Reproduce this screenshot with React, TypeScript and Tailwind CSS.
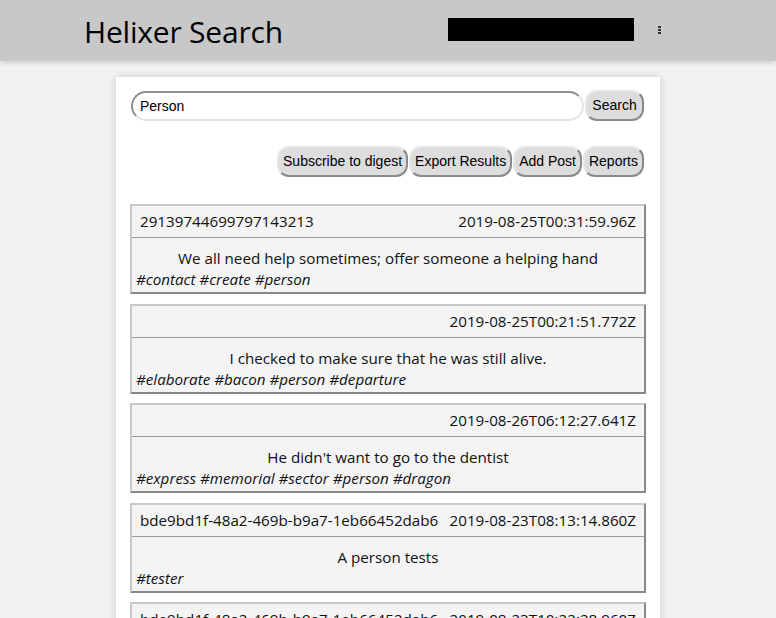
const posts = [
  {
    id: '29139744699797143213',
    date: '2019-08-25T00:31:59.96Z',
    text: 'We all need help sometimes; offer someone a helping hand',
    tags: ['contact', 'create', 'person'],
  },
  {
    id: '',
    date: '2019-08-25T00:21:51.772Z',
    text: 'I checked to make sure that he was still alive.',
    tags: ['elaborate', 'bacon', 'person', 'departure'],
  },
  {
    id: '',
    date: '2019-08-26T06:12:27.641Z',
    text: "He didn't want to go to the dentist",
    tags: ['express', 'memorial', 'sector', 'person', 'dragon'],
  },
  {
    id: 'bde9bd1f-48a2-469b-b9a7-1eb66452dab6',
    date: '2019-08-23T08:13:14.860Z',
    text: 'A person tests',
    tags: ['tester'],
  },
  {
    id: 'bde9bd1f-48a2-469b-b9a7-1eb66452dab6',
    date: '2019-08-23T10:22:28.960Z',
    text: 'A person tests again',
    tags: ['tester'],
  },
]

const actions = ['Subscribe to digest', 'Export Results', 'Add Post', 'Reports']

function Button({ label, className = '' }: { label: string; className?: string }) {
  return (
    <button
      className={`h-[31px] px-[4px] shrink-0 rounded-[12px] bg-[#dddddd] text-[14px] text-black border-2 border-solid border-t-[#e6e6e6] border-l-[#e6e6e6] border-r-[#8a8a8a] border-b-[#8a8a8a] font-['Liberation_Sans',Arial,sans-serif] ${className}`}
    >
      {label}
    </button>
  )
}

export default function App() {
  return (
    <div className="h-[618px] overflow-hidden bg-[#f2f2f2] font-['Open_Sans',sans-serif] text-[#111]">
      {/* Header */}
      <header className="h-[61px] bg-[#c8c8c8] flex items-center shadow-[0_2px_4px_rgba(0,0,0,0.15)] relative z-10">
        <div className="w-[448px] pl-[84px]">
          <h1 className="text-[30px] leading-none tracking-[-0.2px] font-normal text-black mt-[3px]">Helixer Search</h1>
        </div>
        <div className="w-[186px] h-[23px] bg-black -mt-[2px]" />
        <div className="ml-[24px] flex flex-col gap-[1px] -mt-[2px]">
          <span className="w-[3px] h-[2px] bg-[#333]" />
          <span className="w-[3px] h-[2px] bg-[#333]" />
          <span className="w-[3px] h-[2px] bg-[#333]" />
        </div>
      </header>

      {/* Card */}
      <main className="mt-4 mx-auto w-[544px] bg-white shadow-[0_0_8px_rgba(0,0,0,0.18)] pt-[13px] pl-[15px] pr-[16px] pb-4 min-h-[560px]">
        <div className="flex items-center gap-[1px]">
          <input
            defaultValue="Person"
            className="w-[453px] min-w-0 h-[30px] rounded-[15px] px-[7px] text-[14px] text-black bg-white outline-none border-2 border-solid border-t-[#8f8f8f] border-l-[#8f8f8f] border-r-[#e4e4e4] border-b-[#e4e4e4] font-['Liberation_Sans',Arial,sans-serif]"
          />
          <Button label="Search" className="w-[59px]" />
        </div>

        <div className="flex justify-end gap-[1px] mt-[25px]">
          {actions.map((a) => (
            <Button key={a} label={a} />
          ))}
        </div>

        <div className="mt-[27px] -ml-[1px] flex flex-col gap-[9.5px] w-[516px]">
          {posts.map((p, i) => (
            <div
              key={i}
              className="bg-[#f4f4f4] border-2 border-solid border-t-[#c8c8c8] border-l-[#c8c8c8] border-r-[#888] border-b-[#888] text-[15.2px]"
            >
              <div className="h-[32px] flex items-center justify-between gap-[8px] px-[8px] border-b border-[#9a9a9a] whitespace-nowrap">
                <span>{p.id}</span>
                <span>{p.date}</span>
              </div>
              <div className="pt-[9px] px-[4px] h-[54px]">
                <div className="text-center leading-[22px]">{p.text}</div>
                <div className="italic leading-[20px]">
                  {p.tags.map((t) => '#' + t).join(' ')}
                </div>
              </div>
            </div>
          ))}
        </div>
      </main>
    </div>
  )
}
